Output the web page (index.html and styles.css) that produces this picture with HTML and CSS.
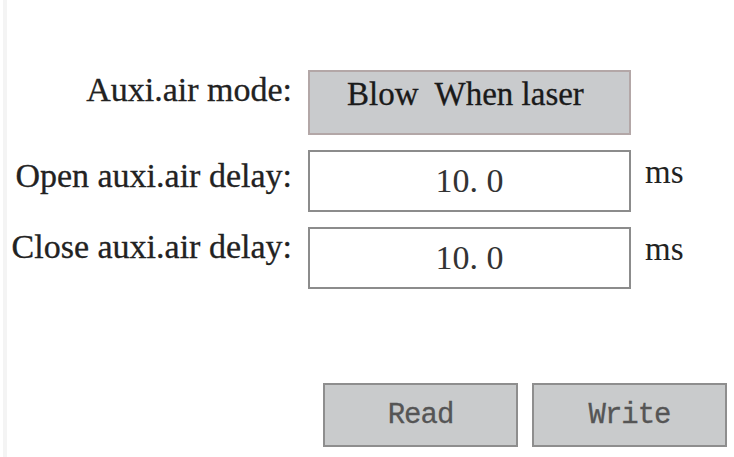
FILE: index.html
```html
<!DOCTYPE html>
<html lang="en">
<head>
    <meta charset="UTF-8">
    <title>Auxi.air settings</title>
    <link rel="stylesheet" href="styles.css">
</head>
<body>
    <div class="panel">
        <div class="form">
            <label class="label">Auxi.air mode:</label>
            <div class="field mode">Blow&nbsp; When laser</div>
            <span></span>

            <label class="label label-open">Open auxi.air delay:</label>
            <div class="field value">10. 0</div>
            <span class="unit">ms</span>

            <label class="label">Close auxi.air delay:</label>
            <div class="field value">10. 0</div>
            <span class="unit">ms</span>
        </div>
        <div class="actions">
            <button class="button">Read</button>
            <button class="button">Write</button>
        </div>
    </div>
</body>
</html>
```

FILE: styles.css
```css
* {
    margin: 0;
    padding: 0;
    box-sizing: border-box;
}

body {
    background-color: #fff;
    font-family: 'Liberation Serif', 'Times New Roman', serif;
    color: #222;
    width: 734px;
    height: 457px;
    overflow: hidden;
}

.panel {
    height: 100%;
    padding-top: 70px;
    border-left: 4px solid #f4f4f4;
    margin-left: 3px;
}

.form {
    display: grid;
    grid-template-columns: 285px 323px auto;
    column-gap: 16px;
    row-gap: 15px;
}

.label {
    font-size: 34px;
    text-align: right;
    white-space: nowrap;
    align-self: start;
    padding-top: 1px;
    -webkit-text-stroke: 0.3px #222;
}

.label-open {
    padding-top: 7px;
}

.field {
    display: flex;
    justify-content: center;
    font-size: 33px;
}

.mode {
    height: 65px;
    padding-top: 4px;
    padding-right: 8px;
    background-color: #c9cbcd;
    border: 2px solid #b3a7a7;
    color: #1a1a1a;
    -webkit-text-stroke: 0.3px #1a1a1a;
}

.value {
    height: 62px;
    align-items: center;
    background-color: #fff;
    border: 2px solid #8c8c8c;
    color: #333;
    font-size: 34px;
}

.unit {
    font-size: 33px;
    margin-left: -2px;
    padding-top: 4px;
    align-self: start;
}

.actions {
    display: flex;
    gap: 14px;
    margin-top: 94px;
    margin-left: 316px;
}

.button {
    width: 195px;
    height: 64px;
    background-color: #c9cbcc;
    border: 2px solid #8e8e8e;
    font-family: 'Liberation Mono', 'Courier New', monospace;
    font-size: 29px;
    letter-spacing: -1px;
    color: #555;
    -webkit-text-stroke: 0.3px #555;
    cursor: pointer;
}
```
